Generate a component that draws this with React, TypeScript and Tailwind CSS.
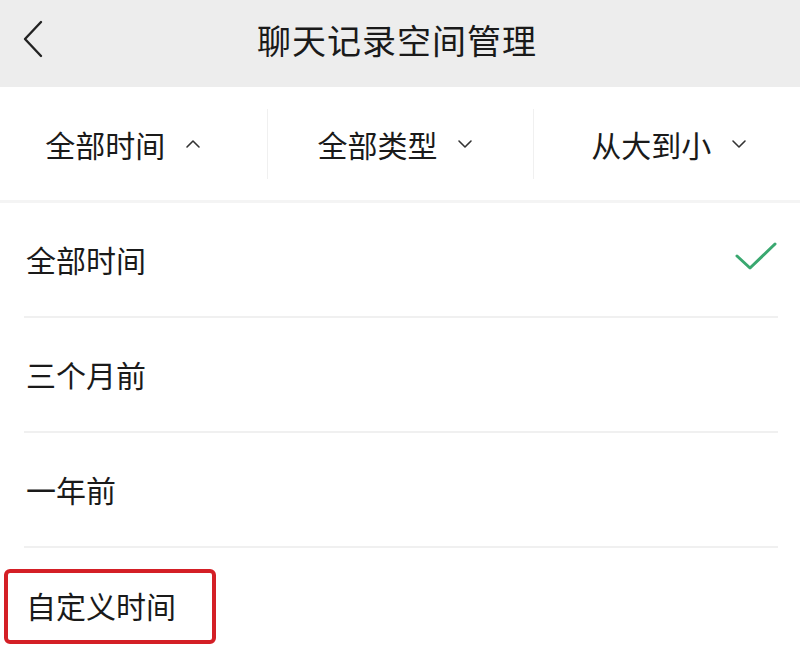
import React from "react";

const options = ["全部时间", "三个月前", "一年前", "自定义时间"];

const filters = [
  { label: "全部时间", open: true, shift: "pr-[20px]" },
  { label: "全部类型", open: false, shift: "pr-[10px]" },
  { label: "从大到小", open: false, shift: "pl-[4px]" },
];

const Chevron = ({ up }: { up: boolean }) => (
  <svg width="16" height="10" viewBox="0 0 16 10" fill="none">
    <path
      d={up ? "M2 8 L8 2 L14 8" : "M2 2 L8 8 L14 2"}
      stroke="#333"
      strokeWidth="1.6"
      strokeLinecap="round"
      strokeLinejoin="round"
    />
  </svg>
);

const App = () => {
  const selected = 0;

  return (
    <div
      className="w-[800px] h-[646px] overflow-hidden bg-white text-[#1a1a1a]"
      style={{ fontFamily: '"Noto Sans CJK SC", "Noto Sans", sans-serif' }}
    >
      {/* header */}
      <div className="relative h-[87px] bg-[#ededed] flex items-center justify-center">
        <button className="absolute left-[20px] top-[20px] p-0">
          <svg width="26" height="38" viewBox="0 0 26 38" fill="none">
            <path
              d="M21 2 L5 19 L21 36"
              stroke="#222"
              strokeWidth="2.4"
              strokeLinecap="round"
              strokeLinejoin="round"
            />
          </svg>
        </button>
        <h1 className="text-[34px] leading-none -mt-[8px] tracking-[1px] pr-[6px]">
          聊天记录空间管理
        </h1>
      </div>

      {/* filter bar */}
      <div className="h-[116px] grid grid-cols-3 items-center border-b-[3px] border-[#f4f4f4]">
        {filters.map((f, i) => (
          <div
            key={f.label}
            className={
              "h-[70px] flex items-center justify-center gap-[20px] " +
              f.shift +
              (i > 0 ? " border-l border-[#f0f0f0]" : "")
            }
          >
            <span className="text-[30px] leading-none">{f.label}</span>
            <Chevron up={f.open} />
          </div>
        ))}
      </div>

      {/* options */}
      <div className="relative">
        {options.map((o, i) => (
          <div key={o} className="pl-[24px] pr-[22px]">
            <div
              className={
                "h-[115px] flex items-center justify-between " +
                (i < options.length - 1 ? "border-b-2 border-[#f0f0f0]" : "")
              }
            >
              <span className="text-[30px] leading-none pl-[2px] -mt-[2px]">{o}</span>
              {i === selected && (
                <svg width="44" height="34" viewBox="0 0 44 34" fill="none" className="-mt-[4px]">
                  <path
                    d="M3 15 L16 27 L41 3"
                    stroke="#3aa870"
                    strokeWidth="3"
                    strokeLinecap="round"
                    strokeLinejoin="round"
                  />
                </svg>
              )}
            </div>
          </div>
        ))}
        {/* highlight annotation */}
        <div className="absolute left-[4px] top-[366px] w-[212px] h-[75px] border-[4px] border-[#d41f26] rounded-[6px]" />
      </div>
    </div>
  );
};

export default App;
